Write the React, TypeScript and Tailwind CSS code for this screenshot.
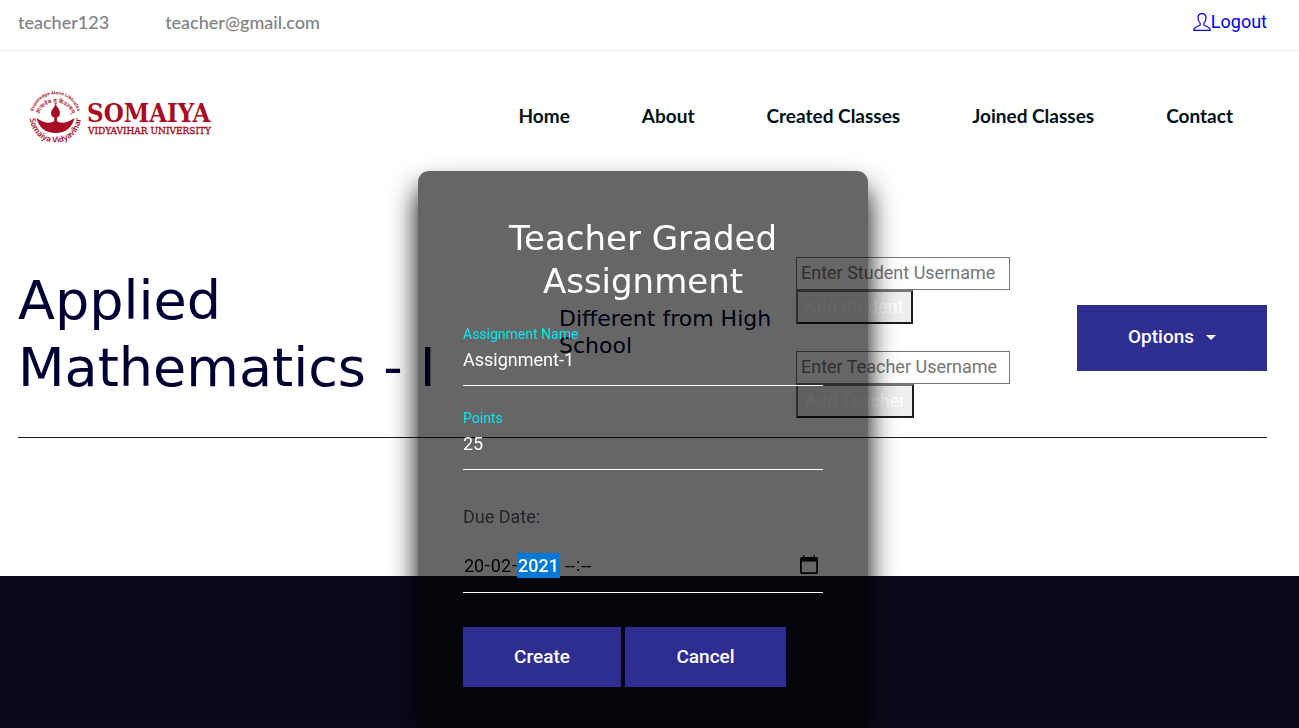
import type { ReactNode } from "react";

const ROBOTO = "font-['Roboto','Liberation_Sans',sans-serif]";
const GEOMETRIC = "font-['Lato','Liberation_Sans',sans-serif]";
const HEADING = "font-['DejaVu_Sans','Noto_Sans',sans-serif]";

function Logo() {
  return (
    <svg viewBox="0 0 186 60" className="h-[60px] w-[186px]" role="img" aria-label="Somaiya Vidyavihar University" fill="#a90d24">
      <defs>
        <path id="arc-outer" d="M4.600 31 A22.800 22.800 0 0 1 50.200 31" />
        <path id="arc-inner" d="M9.900 34.200 A17.500 17.500 0 0 1 44.900 34.200" />
        <path id="arc-lower" d="M1.800 31 A25.600 25.600 0 0 0 53 31" />
      </defs>
      <g fontFamily="'Noto Sans','Liberation Sans',sans-serif">
        <text fontSize="4.4" fontWeight="700">
          <textPath href="#arc-outer" startOffset="50%" textAnchor="middle">Knowledge Alone Liberates</textPath>
        </text>
        <text fontSize="5.8" fontWeight="600">
          <textPath href="#arc-inner" startOffset="50%" textAnchor="middle">ज्ञानादेव तु कैवल्यम्</textPath>
        </text>
        <text fontSize="8" fontWeight="600">
          <textPath href="#arc-lower" startOffset="50%" textAnchor="middle">Somaiya Vidyavihar</textPath>
        </text>
      </g>
      <g transform="translate(0 3)">
        <path d="M27.4 14.5 C28.2 17.500 32 19.800 32 24 C32 27 30.200 28.700 27.600 28.700 C25 28.700 23 27 23 24.200 C23 20.500 27 18.500 27.400 14.500 Z" />
        <path d="M26.700 27 h1.800 l.8 5.500 h-3.400 Z" />
        <path d="M8.500 29 Q18 35.500 24.500 33 Q26 32.200 27.500 31.200 Q29 32.200 30.500 33 Q37 35.500 46.500 29 Q42.500 44 27.500 44 Q12.500 44 8.500 29 Z" />
      </g>
      <g fontFamily="'DejaVu Serif Condensed','DejaVu Serif',serif">
        <text x="59" y="36" fontSize="25.6" fontWeight="700">SOMAIYA</text>
        <text x="60" y="47.500" fontSize="10" stroke="#a90d24" strokeWidth=".35">VIDYAVIHAR UNIVERSITY</text>
      </g>
    </svg>
  );
}

function UserIcon() {
  return (
    <svg viewBox="0 0 18 18" className="size-[18px]" fill="none" stroke="currentColor" strokeWidth="1.2" strokeLinejoin="round" aria-hidden="true">
      <path d="M9 .7 C6.500 .7 5 2.400 5 4.800 C5 7.500 6 9.300 7.200 10.200 V12 C6.500 13.200 1 13.300 .7 17.300 H17.300 C17 13.300 11.500 13.200 10.800 12 V10.200 C12 9.300 13 7.500 13 4.800 C13 2.400 11.500 .7 9 .7 Z" />
    </svg>
  );
}

function CalendarIcon() {
  return (
    <svg viewBox="0 0 18 20" className="h-5 w-[18px]" aria-hidden="true">
      <path fillRule="evenodd" d="M3 .5 h1.500 v1.500 h9 v-1.500 h1.500 v1.500 h1 a2 2 0 0 1 2 2 V17 a2 2 0 0 1 -2 2 H2 a2 2 0 0 1 -2 -2 V4 a2 2 0 0 1 2 -2 h1 Z M1.800 6.500 V17.200 H16.200 V6.500 Z" />
    </svg>
  );
}

function AddUser({ role }: { role: string }) {
  return (
    <div className="flex flex-col items-start text-lg leading-6">
      <input
        aria-label={`${role} username`}
        placeholder={`Enter ${role} Username`}
        className="h-[33px] w-[214px] border border-[#767676] bg-white px-1 pb-0.5 placeholder:text-[#757575]"
      />
      <button className="h-[34px] border-2 border-t-[#767676] border-r-[#1d1d1d] border-b-[#1d1d1d] border-l-[#737373] bg-[#efefef] px-[7px] leading-[30px] text-white">
        Add {role}
      </button>
    </div>
  );
}

function Field({ id, label, value }: { id: string; label: string; value: string }) {
  return (
    <div className="flex flex-col">
      <label htmlFor={id} className="text-sm leading-4 text-[#03e9f4]">{label}</label>
      <input id={id} defaultValue={value} className="h-11 border-b border-white bg-transparent pb-2 text-lg leading-6 text-white outline-none" />
    </div>
  );
}

function DatePart({ label, value, className }: { label: string; value: string; className: string }) {
  return <input aria-label={label} defaultValue={value} className={`h-[25px] p-0 text-center outline-none ${className}`} />;
}

function PrimaryButton({ children, className }: { children: ReactNode; className: string }) {
  return (
    <button className={`flex items-center justify-center bg-[#2d2d92] text-[19px] font-medium text-white ${className}`}>
      {children}
    </button>
  );
}

function AssignmentDialog() {
  return (
    <div className="fixed inset-x-0 top-[171px] z-10 flex justify-center pr-[13px]">
      <form
        role="dialog"
        aria-labelledby="dialog-title"
        onSubmit={(e) => e.preventDefault()}
        className="w-[450px] rounded-[11px] bg-black/60 px-[45px] pt-[46px] pb-[45px] shadow-[0_17px_28px_#000]"
      >
        <h2 id="dialog-title" className={`mb-[23px] text-center text-[34px] leading-[43px] text-white ${HEADING}`}>
          Teacher Graded Assignment
        </h2>
        <div className="flex flex-col gap-6">
          <Field id="assignment-name" label="Assignment Name" value="Assignment-1" />
          <Field id="points" label="Points" value="25" />
        </div>
        <fieldset className="mt-[35px]">
          <legend className="text-lg leading-6 text-[#212529]">Due Date:</legend>
          <div className="mt-6 flex h-10 items-start border-b border-white text-lg leading-6 text-black">
            <DatePart label="Day" value="20" className="w-[22px] bg-transparent" />
            <span>-</span>
            <DatePart label="Month" value="02" className="w-[22px] bg-transparent" />
            <span>-</span>
            <DatePart label="Year" value="2021" className="mr-1 w-[43px] bg-[#0078d7] font-medium text-white" />
            <DatePart label="Hours" value="--" className="w-3 bg-transparent" />
            <span>:</span>
            <DatePart label="Minutes" value="--" className="w-3 bg-transparent" />
            <button type="button" aria-label="Open calendar" className="mt-0.5 mr-[5px] ml-auto">
              <CalendarIcon />
            </button>
          </div>
        </fieldset>
        <div className="mt-[34px] flex gap-1">
          <PrimaryButton className="h-[60px] w-[158px]">Create</PrimaryButton>
          <PrimaryButton className="h-[60px] w-[161px]">Cancel</PrimaryButton>
        </div>
      </form>
    </div>
  );
}

const NAV = ["Home", "About", "Created Classes", "Joined Classes", "Contact"];

export default function App() {
  return (
    <div className={`flex min-h-screen flex-col bg-white text-[#212529] ${ROBOTO}`}>
      <div className="flex h-[51px] items-center justify-between border-b border-[#ececec] pr-8 pb-[7px] pl-[18px]">
        <div className={`flex gap-14 text-lg font-medium text-[#808080] ${GEOMETRIC}`}>
          <span>teacher123</span>
          <span>teacher@gmail.com</span>
        </div>
        <a href="#logout" className="flex items-center text-lg text-[#0000ee]">
          <UserIcon />
          Logout
        </a>
      </div>

      <header className="flex h-[130px] items-center justify-between pr-[66px] pl-7">
        <a href="#home"><Logo /></a>
        <nav className={`flex gap-[72px] text-[19px] font-bold text-[#001217] ${GEOMETRIC}`}>
          {NAV.map((item) => (
            <a key={item} href="#home">{item}</a>
          ))}
        </nav>
      </header>

      <main className="pt-[76px] pr-8 pb-[138px] pl-[18px]">
        <section className="grid grid-cols-[541fr_237fr_281fr_190fr] items-center border-b border-[#1d1d1d] pb-[19px]">
          <h1 className={`pb-2 text-[54px] leading-[67px] text-[#000033] ${HEADING}`}>Applied Mathematics - I</h1>
          <p className={`pb-3 text-[22px] leading-[27px] text-[#000033] ${HEADING}`}>Different from High School</p>
          <div className="flex flex-col gap-[27px]">
            <AddUser role="Student" />
            <AddUser role="Teacher" />
          </div>
          <PrimaryButton className="h-[66px] w-full gap-3">
            Options
            <svg viewBox="0 0 10 5" className="h-[5px] w-2.5" fill="currentColor" aria-hidden="true">
              <path d="M0 0 H10 L5 5 Z" />
            </svg>
          </PrimaryButton>
        </section>
      </main>

      <footer className="flex-1 bg-[#0b0a1c]" />
      <AssignmentDialog />
    </div>
  );
}
